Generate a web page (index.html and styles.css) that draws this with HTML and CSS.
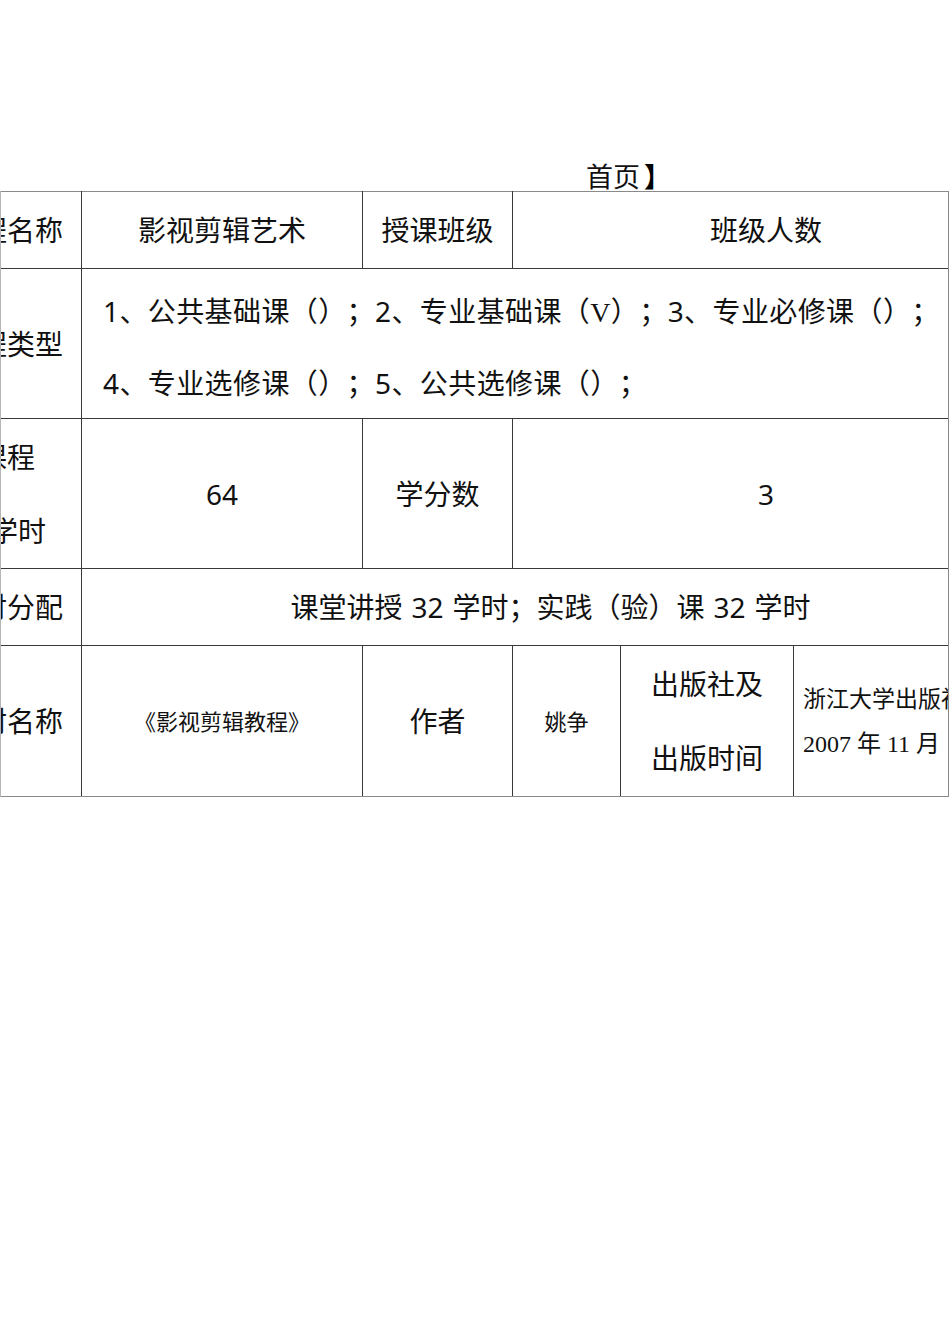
FILE: index.html
```html
<!DOCTYPE html>
<html lang="zh">
<head>
<meta charset="utf-8">
<title>课程信息</title>
<link rel="stylesheet" href="styles.css">
</head>
<body>
<div class="page">
  <div class="crumb">首页<span class="brk">】</span></div>
  <div class="sheet">
    <table class="info">
      <colgroup>
        <col class="c1"><col class="c2"><col class="c3"><col class="c4"><col class="c5"><col class="c6">
      </colgroup>
      <tr class="r-short first">
        <td class="label">课程名称</td>
        <td>影视剪辑艺术</td>
        <td>授课班级</td>
        <td colspan="3">班级人数</td>
      </tr>
      <tr class="r-tall">
        <td class="label">课程类型</td>
        <td colspan="5" class="types">
          <div>1、公共基础课（）；2、专业基础课（<span class="serif">V</span>）；3、专业必修课（）；</div>
          <div>4、专业选修课（）；5、公共选修课（）；</div>
        </td>
      </tr>
      <tr class="r-tall">
        <td class="label two">
          <div class="l1">总课程</div>
          <div class="l2">学时</div>
        </td>
        <td class="num">64</td>
        <td>学分数</td>
        <td colspan="3" class="num">3</td>
      </tr>
      <tr class="r-short">
        <td class="label">学时分配</td>
        <td colspan="5">课堂讲授<span class="n">32</span>学时；实践（验）课<span class="n">32</span>学时</td>
      </tr>
      <tr class="r-tall last">
        <td class="label">教材名称</td>
        <td class="small">《影视剪辑教程》</td>
        <td>作者</td>
        <td class="small">姚争</td>
        <td class="pub"><div>出版社及</div><div>出版时间</div></td>
        <td class="press"><div>浙江大学出版社</div><div class="date">2007 年 11 月</div></td>
      </tr>
    </table>
  </div>
</div>
</body>
</html>
```

FILE: styles.css
```css
html, body {
  margin: 0;
  padding: 0;
  background: #ffffff;
}
body {
  font-family: "Noto Sans", "Noto Sans CJK SC", sans-serif;
  color: #111111;
  text-spacing-trim: space-all;
}
.page {
  padding-top: 160px;
}
.crumb {
  height: 31px;
  line-height: 31px;
  padding-left: 586px;
  font-size: 27px;
  font-family: "Noto Sans CJK SC", sans-serif;
}
.brk {
  font-weight: 700;
  color: #000;
  margin-left: 4px;
}
.sheet {
  width: 947px;
  border-left: 1px solid #b5b5b5;
  border-right: 1px solid #8a8a8a;
  overflow: hidden;
}
.info {
  margin-left: -68px;
  border-collapse: collapse;
  table-layout: fixed;
  width: 1086px;
}
.c1 { width: 148px; }
.c2 { width: 281px; }
.c3 { width: 150px; }
.c4 { width: 108px; }
.c5 { width: 173px; }
.c6 { width: 226px; }
.info td {
  border: 1px solid #3a3a3a;
  padding: 0;
  text-align: center;
  vertical-align: middle;
  font-size: 28px;
  line-height: 36px;
  white-space: nowrap;
  overflow: hidden;
}
.info tr.first td {
  border-top-color: #8a8a8a;
}
.info tr.last td {
  border-bottom-color: #8a8a8a;
  height: 150px;
}
.r-short td { height: 76px; }
.r-tall td { height: 149px; }
.info td.label {
  text-align: right;
  padding-right: 18px;
}
.info td.two .l1 {
  padding-right: 28px;
  line-height: 74px;
}
.info td.two .l2 {
  padding-right: 17px;
  line-height: 74px;
}
.info td.types {
  text-align: left;
  padding-left: 21px;
  padding-top: 6px;
  height: 143px;
  line-height: 70px;
  letter-spacing: 0.4px;
}
.serif {
  font-family: "Liberation Serif", serif;
}
.num {
  font-size: 29px;
}
.n {
  padding: 0 9px;
}
.info td.small {
  font-size: 22px;
}
.info td.pub div {
  line-height: 74px;
}
.info td.press {
  text-align: left;
  padding-left: 9px;
  font-size: 23px;
  line-height: 46px;
}
.info td.press .date {
  font-family: "Liberation Serif", "Noto Sans CJK SC", serif;
  font-size: 24px;
}
```
